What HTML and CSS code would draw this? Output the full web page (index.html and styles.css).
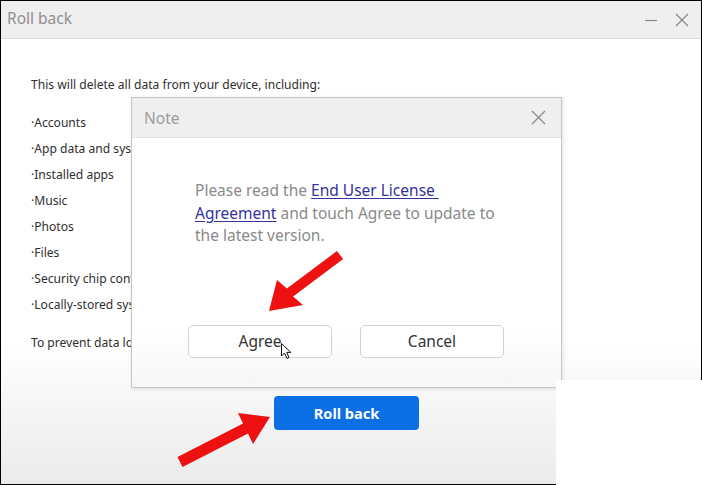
FILE: index.html
```html
<!DOCTYPE html>
<html lang="en">
<head>
<meta charset="utf-8">
<title>Roll back</title>
<link rel="stylesheet" href="styles.css">
</head>
<body>
<div class="screen">
  <div class="window">
    <div class="titlebar">
      <span class="title">Roll back</span>
      <div class="controls">
        <svg class="ctl min" width="12" height="12" viewBox="0 0 12 12"><path d="M0 6.5H12" stroke="#8a8a8a" stroke-width="1.2"/></svg>
        <svg class="ctl close" width="14" height="14" viewBox="0 0 14 14"><path d="M1 1L13 13M13 1L1 13" stroke="#8a8a8a" stroke-width="1.3"/></svg>
      </div>
    </div>
    <div class="body">
      <p class="lead">This will delete all data from your device, including:</p>
      <ul class="list">
        <li>·Accounts</li>
        <li>·App data and system settings</li>
        <li>·Installed apps</li>
        <li>·Music</li>
        <li>·Photos</li>
        <li>·Files</li>
        <li>·Security chip content</li>
        <li>·Locally-stored system updates</li>
      </ul>
      <p class="tip">To prevent data loss,</p>
      <div class="footer">
        <button class="primary">Roll back</button>
      </div>
    </div>
  </div>

  <div class="dialog">
    <div class="dlg-title">
      <span class="dlg-name">Note</span>
      <svg class="dlg-close" width="15" height="15" viewBox="0 0 15 15"><path d="M1 1L14 14M14 1L1 14" stroke="#8c8c8c" stroke-width="1.3"/></svg>
    </div>
    <div class="dlg-body">
      <p class="msg">Please read the <a class="link" href="#">End User License&nbsp;<br>Agreement</a> and touch Agree to update to<br>the latest version.</p>
      <div class="actions">
        <button class="btn">Agree</button>
        <button class="btn">Cancel</button>
      </div>
    </div>
  </div>

  <div class="crop"></div>

  <svg class="annot" width="702" height="485" viewBox="0 0 702 485">
    <polygon fill="#ee1111" points="336.9,251.1 286.9,288.6 277,280 269,311 303,305 293.1,296.4 343.1,258.9"/>
    <polygon fill="#ee1111" points="177.5,457.1 243,423.6 238,413 270,417 253,444 248,433.4 182.5,466.9"/>
    <path d="M281.5 343.5 L281.5 356 L284.5 353 L287 358.5 L289 357.6 L286.7 352.4 L290.8 352.4 Z" fill="#fff" stroke="#111" stroke-width="1" stroke-linejoin="round"/>
  </svg>
</div>
</body>
</html>
```

FILE: styles.css
```css
* { box-sizing: border-box; }
html, body { margin: 0; padding: 0; }
body {
  width: 702px;
  height: 485px;
  overflow: hidden;
  font-family: "Noto Sans", "Open Sans", sans-serif;
}
.screen {
  position: relative;
  width: 702px;
  height: 485px;
  background: #000;
  padding: 1px 1px 0 1px;
}
.window {
  width: 700px;
  height: 483px;
  display: flex;
  flex-direction: column;
  background: #fff;
}
.titlebar {
  height: 38px;
  flex: none;
  display: flex;
  align-items: center;
  justify-content: space-between;
  background: #efefef;
  border-bottom: 1px solid #dadada;
  padding: 0 12px 3px 6px;
}
.title {
  font-size: 15.5px;
  color: #8e8e8e;
}
.controls {
  display: flex;
  align-items: center;
  gap: 18px;
  margin-top: 3px;
}
.ctl { display: block; }
.body {
  flex: 1;
  padding: 33px 0 0 30px;
  background: linear-gradient(to bottom, #ffffff 0%, #ffffff 68%, #ebebeb 100%);
}
.lead, .tip {
  margin: 0;
  font-size: 12.1px;
  line-height: 26px;
  color: #2e2e2e;
  white-space: nowrap;
}
.list {
  list-style: none;
  margin: 12px 0;
  padding: 0;
}
.list li {
  font-size: 12.1px;
  line-height: 26px;
  color: #2e2e2e;
  white-space: nowrap;
}
.footer {
  margin-top: 40px;
  padding-left: 243px;
}
.primary {
  width: 145px;
  height: 34px;
  border: none;
  border-radius: 4px;
  background: #0d6fe6;
  color: #fff;
  font-family: inherit;
  font-weight: 700;
  font-size: 14.5px;
  padding: 0;
}
.dialog {
  position: absolute;
  left: 131px;
  top: 97px;
  width: 431px;
  height: 291px;
  background: linear-gradient(to bottom, #ffffff 0%, #ffffff 80%, #f6f6f6 100%);
  border: 1px solid #c6c6c6;
  box-shadow: 1px 1px 4px rgba(0, 0, 0, 0.12);
  display: flex;
  flex-direction: column;
}
.dlg-title {
  height: 40px;
  flex: none;
  display: flex;
  align-items: center;
  justify-content: space-between;
  background: #efefef;
  border-bottom: 1px solid #e2e2e2;
  padding: 0 15px 0 12px;
}
.dlg-name {
  font-size: 15.5px;
  color: #9c9c9c;
}
.dlg-close { display: block; }
.dlg-body {
  padding: 41px 0 0 63px;
}
.msg {
  margin: 0;
  font-size: 15.5px;
  line-height: 22.5px;
  color: #8a8a8a;
  white-space: nowrap;
}
.link {
  color: #33339e;
  text-decoration: underline;
  text-underline-offset: 2px;
}
.actions {
  display: flex;
  gap: 28px;
  margin-top: 78px;
  margin-left: -7px;
}
.btn {
  width: 144px;
  height: 33px;
  border: 1px solid #d2d2d2;
  border-radius: 5px;
  background: #fff;
  color: #333;
  font-family: inherit;
  font-size: 15.5px;
  padding: 0;
}
.crop {
  position: absolute;
  left: 556px;
  top: 380px;
  width: 146px;
  height: 105px;
  background: #fff;
}
.annot {
  position: absolute;
  left: 0;
  top: 0;
  pointer-events: none;
}
```
